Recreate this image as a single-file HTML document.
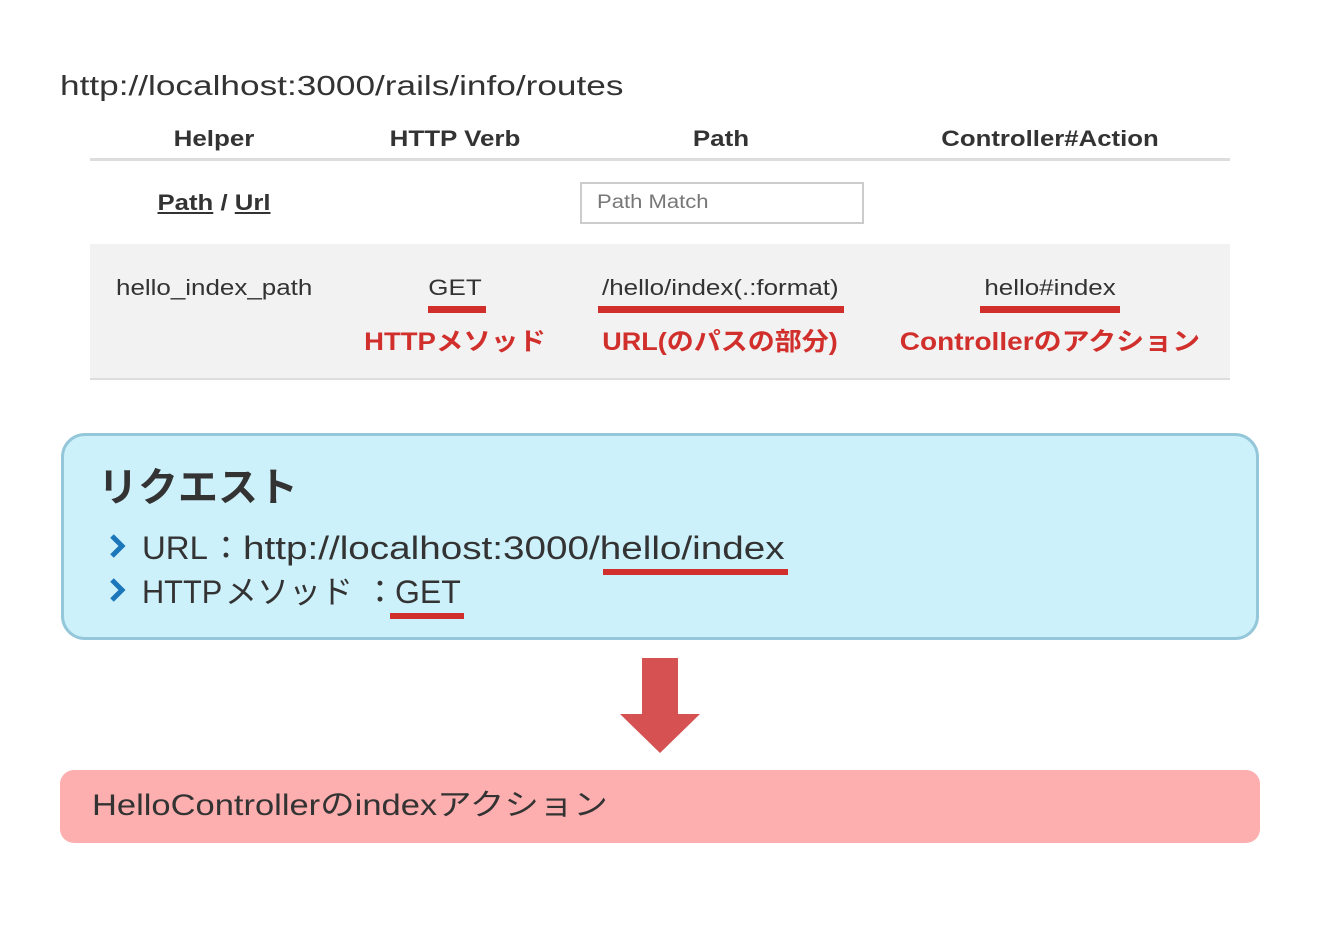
<!DOCTYPE html>
<html><head><meta charset="utf-8"><style>
body{margin:0;width:1320px;height:940px;background:#fff;position:relative;font-family:"Liberation Sans","Noto Sans CJK JP",sans-serif;color:#333;overflow:hidden}
.a{position:absolute;white-space:nowrap;line-height:1}
.c{transform:translateX(-50%) scaleX(var(--s,1))}
.l{transform:scaleX(var(--s,1));transform-origin:0 0}
.b{font-weight:bold}
.red{color:#d12f2c;font-weight:bold;font-size:25px}
.ul{position:absolute;background:#d12f2c}
.bl{font-size:32px}
</style></head><body>
<div class="a l" style="left:60px;top:72px;font-size:28px;--s:1.257">http://localhost:3000/rails/info/routes</div>
<div class="a b c" style="left:214px;top:128px;font-size:22px;--s:1.18">Helper</div>
<div class="a b c" style="left:455px;top:128px;font-size:22px;--s:1.18">HTTP Verb</div>
<div class="a b c" style="left:721px;top:128px;font-size:22px;--s:1.18">Path</div>
<div class="a b c" style="left:1050px;top:128px;font-size:22px;--s:1.17">Controller#Action</div>
<div style="position:absolute;left:90px;top:158px;width:1140px;height:3px;background:#ddd"></div>
<div class="a b c" style="left:214px;top:192px;font-size:22px;--s:1.17"><u>Path</u> / <u>Url</u></div>
<div style="position:absolute;left:580px;top:182px;width:280px;height:38px;border:2px solid #ccc;background:#fff"></div>
<div class="a l" style="left:597px;top:193px;font-size:19px;color:#777;--s:1.16">Path Match</div>
<div style="position:absolute;left:90px;top:244px;width:1140px;height:134px;background:#f2f2f2;border-bottom:2px solid #ddd"></div>
<div class="a l" style="left:116px;top:277px;font-size:22px;--s:1.18">hello_index_path</div>
<div class="a c" style="left:455px;top:277px;font-size:22px;--s:1.18">GET</div>
<div class="a l" style="left:602px;top:277px;font-size:22px;--s:1.18">/hello/index(.:format)</div>
<div class="a c" style="left:1050px;top:277px;font-size:22px;--s:1.18">hello#index</div>
<div class="ul" style="left:428px;top:306px;width:58px;height:7px"></div>
<div class="ul" style="left:598px;top:306px;width:246px;height:7px"></div>
<div class="ul" style="left:980px;top:306px;width:140px;height:7px"></div>
<div class="a red c" style="left:455px;top:330px;--s:1.1">HTTPメソッド</div>
<div class="a red c" style="left:720px;top:330px;--s:1.08">URL(のパスの部分)</div>
<div class="a red c" style="left:1050px;top:330px;--s:1.12">Controllerのアクション</div>
<div style="position:absolute;left:61px;top:433px;width:1192px;height:201px;background:#cdf1fa;border:3px solid #94c7da;border-radius:24px"></div>
<div class="a b" style="left:98px;top:468px;font-size:40px">リクエスト</div>
<svg style="position:absolute;left:108px;top:533px" width="20" height="26"><path d="M4 3 L14 13 L4 23" fill="none" stroke="#1a77b9" stroke-width="5"/></svg>
<svg style="position:absolute;left:108px;top:577px" width="20" height="26"><path d="M4 3 L14 13 L4 23" fill="none" stroke="#1a77b9" stroke-width="5"/></svg>
<div class="a bl l" style="left:142px;top:532px;--s:1.03">URL</div>
<div class="a bl" style="left:210px;top:532px">：</div>
<div class="a bl l" style="left:243px;top:532px;--s:1.208">http://localhost:3000/hello/index</div>
<div class="a bl l" style="left:142px;top:576px;--s:0.96">HTTP</div>
<div class="a bl" style="left:225px;top:576px">メソッド</div>
<div class="a bl" style="left:364px;top:576px">：</div>
<div class="a bl" style="left:395px;top:576px">GET</div>
<div class="ul" style="left:603px;top:569px;width:185px;height:6px"></div>
<div class="ul" style="left:390px;top:613px;width:74px;height:6px"></div>
<svg style="position:absolute;left:620px;top:658px" width="80" height="96"><path d="M22 0 H58 V56 H80 L40 95 L0 56 H22 Z" fill="#d55152"/></svg>
<div style="position:absolute;left:60px;top:770px;width:1200px;height:73px;background:#fdaeae;border-radius:14px"></div>
<div class="a l" style="left:92px;top:791px;font-size:30px;--s:1.15">HelloControllerのindexアクション</div>
</body></html>
